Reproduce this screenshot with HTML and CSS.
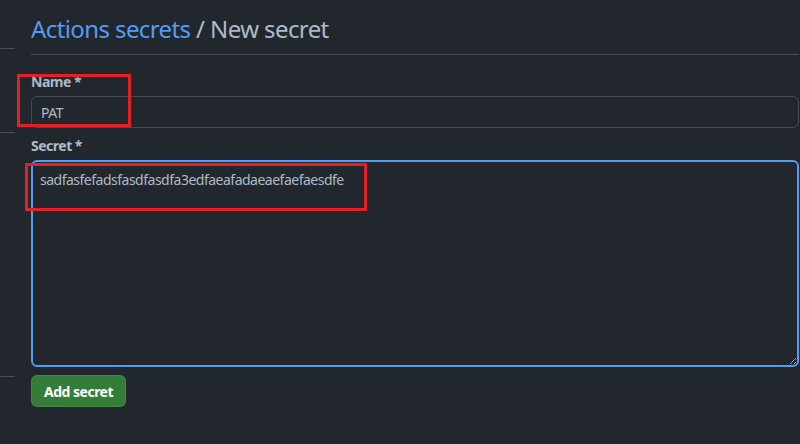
FILE: index.html
```html
<!DOCTYPE html>
<html lang="en">
<head>
<meta charset="utf-8">
<title>New secret</title>
<link rel="stylesheet" href="styles.css">
</head>
<body>
<div class="page">
  <nav class="sidebar">
    <div class="side-item side-a"></div>
    <div class="side-item side-b"></div>
    <div class="side-item side-c"></div>
  </nav>
  <main class="main">
    <h1 class="title"><a class="crumb" href="#">Actions secrets</a> / New secret</h1>
    <form class="form">
      <div class="group">
        <label class="label" for="name">Name *</label>
        <input class="input" id="name" type="text" value="PAT">
        <span class="mark mark-name"></span>
      </div>
      <div class="group">
        <label class="label" for="secret">Secret *</label>
        <textarea class="textarea" id="secret">sadfasfefadsfasdfasdfa3edfaeafadaeaefaefaesdfe</textarea>
        <span class="mark mark-secret"></span>
      </div>
      <button class="btn" type="button">Add secret</button>
    </form>
  </main>
</div>
</body>
</html>
```
FILE: styles.css
```css
html, body {
  margin: 0;
  padding: 0;
  background: #22272e;
}
body {
  font-family: "Noto Sans", "Open Sans", sans-serif;
  color: #adbac7;
  font-size: 14px;
  line-height: 21px;
  letter-spacing: -0.5px;
  height: 444px;
  overflow: hidden;
}
.page {
  display: flex;
  align-items: flex-start;
}
.sidebar {
  width: 15px;
  flex: none;
  display: flex;
  flex-direction: column;
}
.side-item {
  border-bottom: 1px solid #444c56;
}
.side-a { height: 48px; }
.side-b { height: 83px; }
.side-c { height: 243px; }
.main {
  flex: 1;
  margin-left: 16px;
  margin-right: 1px;
}
.title {
  margin: 11px 0 0;
  padding-bottom: 7px;
  border-bottom: 1px solid #444c56;
  font-size: 24px;
  line-height: 36px;
  font-weight: 400;
  letter-spacing: -0.6px;
  color: #adbac7;
}
.crumb {
  color: #539bf5;
  text-decoration: none;
}
.form {
  display: flex;
  flex-direction: column;
  align-items: flex-start;
  padding-top: 16px;
}
.group {
  position: relative;
  display: flex;
  flex-direction: column;
  width: 100%;
  margin-bottom: 7px;
}
.label {
  font-weight: 700;
  margin-bottom: 4px;
  color: #adbac7;
}
.input, .textarea {
  box-sizing: border-box;
  width: 100%;
  font: inherit;
  letter-spacing: inherit;
  color: #adbac7;
  background: #22272e;
  outline: none;
}
.input {
  height: 32px;
  border: 1px solid #444c56;
  border-radius: 6px;
  padding: 0 9px;
}
.textarea {
  height: 207px;
  border: 2px solid #539bf5;
  border-radius: 6px;
  padding: 7px 7px;
  resize: vertical;
}
.mark {
  position: absolute;
  border: 3px solid #e41f26;
  box-sizing: border-box;
  pointer-events: none;
}
.mark-name {
  left: -14px;
  top: 3px;
  width: 114px;
  height: 53px;
}
.mark-secret {
  left: -6px;
  top: 28px;
  width: 342px;
  height: 48px;
}
.btn {
  margin-top: 1px;
  height: 32px;
  padding: 0 12px;
  box-sizing: border-box;
  font: inherit;
  font-weight: 700;
  letter-spacing: inherit;
  color: #ffffff;
  background: #347d39;
  border: 1px solid rgba(205, 217, 229, 0.1);
  border-radius: 6px;
}
```
